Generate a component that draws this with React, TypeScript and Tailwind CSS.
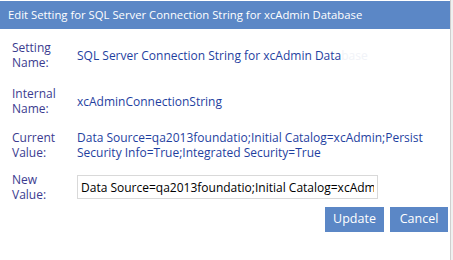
export default function App() {
  const label = "text-[#3b3b8f] leading-[15px]";
  const value = "text-[#1f3f9f] leading-[15px]";

  return (
    <div className="flex h-[260px] w-[453px] bg-white" style={{ fontFamily: '"Open Sans", "Noto Sans", sans-serif' }}>
      <div className="w-[450px] text-[12px]">
        <div className="mt-px flex h-[28px] items-center bg-[#5b87c6] pl-2 text-[11.3px] text-white">
          Edit Setting for SQL Server Connection String for xcAdmin Database
        </div>

        <div className="px-3 pt-[11px]">
          <div className="grid grid-cols-[65px_1fr] items-center">
            <div className={label}>Setting<br />Name:</div>
            <div className={value}>
              SQL Server Connection String for xcAdmin Data<span className="text-[#f1f3f8]">base</span>
            </div>
          </div>

          <div className="mt-4 grid grid-cols-[65px_1fr] items-center">
            <div className={label}>Internal<br />Name:</div>
            <div className={value}>xcAdminConnectionString</div>
          </div>

          <div className="mt-[14px] grid grid-cols-[65px_1fr] items-start">
            <div className={label}>Current<br />Value:</div>
            <div className={`${value} whitespace-nowrap`}>
              Data Source=qa2013foundatio;Initial Catalog=xcAdmin;Persist<br />
              Security Info=True;Integrated Security=True
            </div>
          </div>

          <div className="mt-3 grid grid-cols-[65px_1fr] items-center">
            <div className={label}>New<br />Value:</div>
            <div>
              <input
                className="h-[24px] w-[301px] border border-[#d9d9d9] px-[3px] text-[12px] text-black outline-none"
                defaultValue="Data Source=qa2013foundatio;Initial Catalog=xcAdmin;Persist Security Info=True;Integrated Security=True"
              />
            </div>
          </div>
        </div>

        <div className="mt-[5px] flex justify-end gap-[6px] pr-[2px]">
          <button className="h-[25px] w-[59px] bg-[#5b87c6] text-[12.5px] text-white">Update</button>
          <button className="h-[25px] w-[58px] bg-[#5b87c6] text-[12.5px] text-white">Cancel</button>
        </div>
      </div>
      <div className="w-px bg-[#cfcfcf]" />
      <div className="w-[2px] bg-[#f0f0f0]" />
    </div>
  );
}
